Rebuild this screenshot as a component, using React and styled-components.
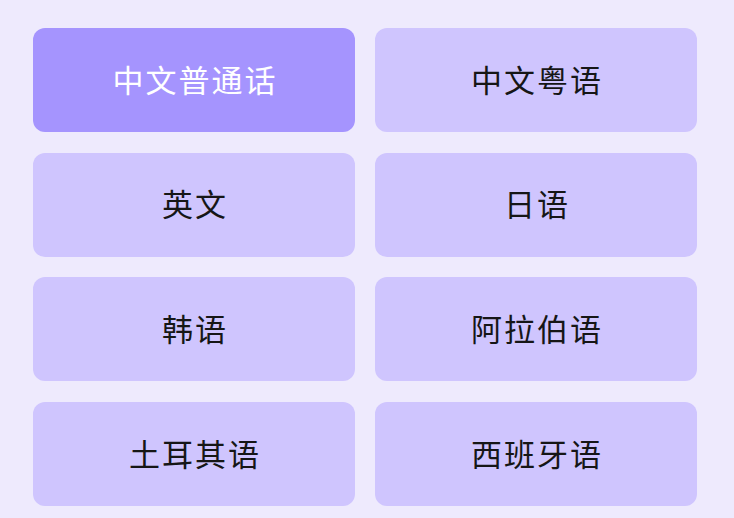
import styled, { createGlobalStyle } from "styled-components";

const GlobalStyle = createGlobalStyle`
  html, body {
    margin: 0;
    padding: 0;
    background: #eeeafd;
  }
  body {
    font-family: "Noto Sans CJK SC", "Noto Sans", sans-serif;
  }
`;

const Page = styled.div`
  width: 734px;
  height: 518px;
  box-sizing: border-box;
  padding: 28px 37px 0 33px;
  background: #eeeafd;
  overflow: hidden;
`;

const Grid = styled.div`
  display: grid;
  grid-template-columns: 1fr 1fr;
  grid-auto-rows: 104px;
  column-gap: 20px;
  row-gap: 20.7px;
`;

const LangButton = styled.button`
  display: flex;
  align-items: center;
  justify-content: center;
  border: none;
  border-radius: 12px;
  padding: 0 0 4px 2px;
  background: ${(p) => (p.$active ? "#a594fe" : "#cfc5fe")};
  color: ${(p) => (p.$active ? "#ffffff" : "#161616")};
  font-family: "Noto Sans CJK SC", "Noto Sans", sans-serif;
  font-size: 31px;
  letter-spacing: 2px;
  cursor: pointer;
`;

const languages = [
  "中文普通话",
  "中文粤语",
  "英文",
  "日语",
  "韩语",
  "阿拉伯语",
  "土耳其语",
  "西班牙语",
];

export default function App() {
  return (
    <>
      <GlobalStyle />
      <Page>
        <Grid>
          {languages.map((name, i) => (
            <LangButton key={name} $active={i === 0}>
              {name}
            </LangButton>
          ))}
        </Grid>
      </Page>
    </>
  );
}
